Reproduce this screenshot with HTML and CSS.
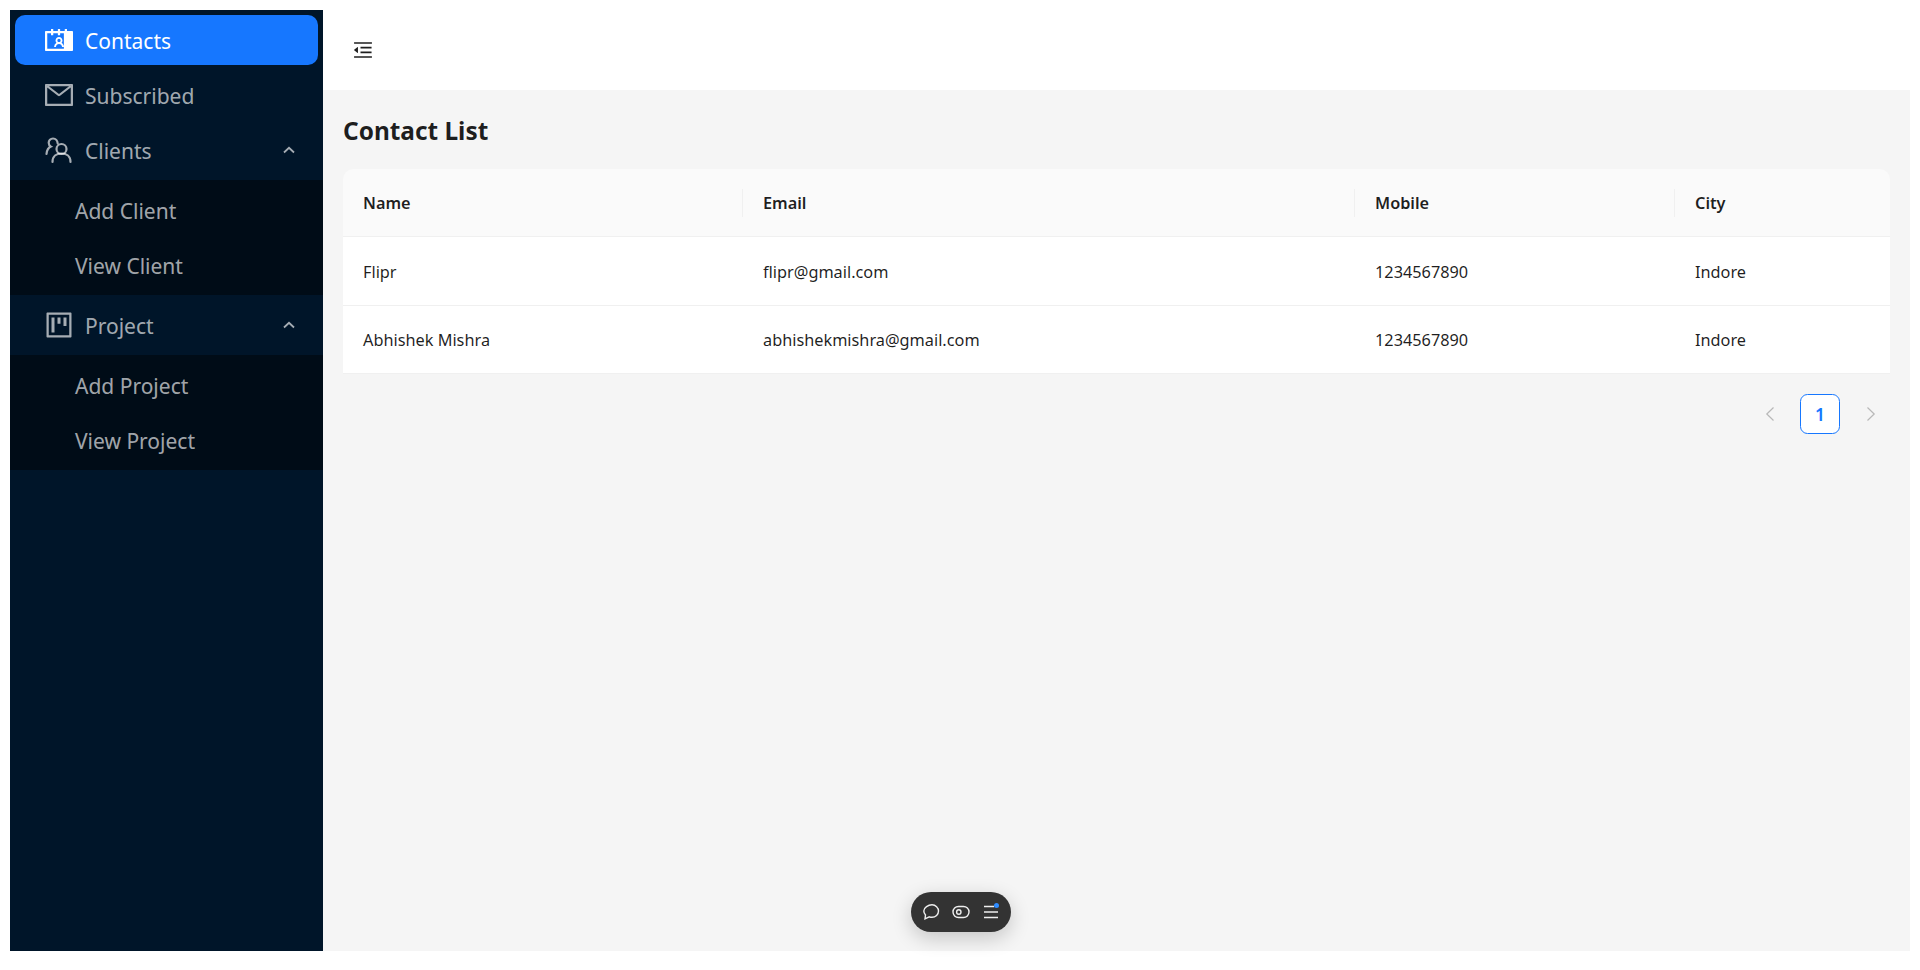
FILE: index.html
```html
<!DOCTYPE html>
<html lang="en">
<head>
<meta charset="utf-8">
<title>Contact List</title>
<link rel="stylesheet" href="styles.css">
</head>
<body>
<div class="app">
  <aside class="sider">
    <div class="item active">
      <svg class="icon" viewBox="64 64 896 896"><path d="M594.3 601.5a111.8 111.8 0 0029.1-75.5c0-61.9-49.9-112-111.4-112s-111.4 50.1-111.4 112c0 29.1 11 55.5 29.1 75.5a158.09 158.09 0 00-74.6 126.1 8 8 0 008 8.4H407c4.2 0 7.6-3.3 7.9-7.5 3.8-50.6 46-90.5 97.2-90.5s93.4 40 97.2 90.5c.3 4.2 3.7 7.5 7.9 7.5H660a8 8 0 008-8.4c-2.8-53.3-32-99.7-74.6-126.1zM512 578c-28.5 0-51.7-23.3-51.7-52s23.2-52 51.7-52 51.7 23.3 51.7 52-23.2 52-51.7 52zm416-354H768v-56c0-4.4-3.6-8-8-8h-56c-4.4 0-8 3.6-8 8v56H548v-56c0-4.4-3.6-8-8-8h-56c-4.4 0-8 3.6-8 8v56H328v-56c0-4.4-3.6-8-8-8h-56c-4.4 0-8 3.6-8 8v56H96c-17.7 0-32 14.3-32 32v576c0 17.7 14.3 32 32 32h832c17.7 0 32-14.3 32-32V256c0-17.7-14.3-32-32-32zm-40 568H136V296h120v56c0 4.4 3.6 8 8 8h56c4.4 0 8-3.6 8-8v-56h148v56c0 4.4 3.6 8 8 8h56c4.4 0 8-3.6 8-8v-56h120v496z"/></svg>
      <span>Contacts</span>
    </div>
    <div class="item">
      <svg class="icon" viewBox="64 64 896 896"><path d="M928 160H96c-17.7 0-32 14.3-32 32v640c0 17.7 14.3 32 32 32h832c17.7 0 32-14.3 32-32V192c0-17.7-14.3-32-32-32zm-40 110.8V792H136V270.8l-27.6-21.5 39.3-50.5 42.8 33.3h643.1l42.8-33.3 39.3 50.5-27.7 21.5zM833.6 232L512 482 190.4 232l-42.8-33.3-39.3 50.5 27.6 21.5 341.6 265.6a55.99 55.99 0 0068.7 0L888 270.8l27.6-21.5-39.3-50.5-42.7 33.2z"/></svg>
      <span>Subscribed</span>
    </div>
    <div class="item">
      <svg class="icon stroked" viewBox="0 0 28 28"><circle cx="16.5" cy="13" r="5"/><path d="M7.5 26c0-5.5 4-8.5 9-8.5s9 3 9 8.5"/><path d="M12.7 7.500c-.2-2.600-2-5-4.700-5-2.500 0-4.300 2-4.300 4.300 0 1.700.8 3 2.200 3.800C3.500 11.700 1.800 14.800 1.500 18"/></svg>
      <span>Clients</span>
      <svg class="chevron" viewBox="0 0 12 8"><path d="M1 6.500 6 1.800l5 4.700"/></svg>
    </div>
    <div class="submenu">
      <div class="item sub"><span>Add Client</span></div>
      <div class="item sub"><span>View Client</span></div>
    </div>
    <div class="item">
      <svg class="icon" viewBox="64 64 896 896"><path d="M280 752h80c4.400 0 8-3.600 8-8V280c0-4.400-3.600-8-8-8h-80c-4.400 0-8 3.600-8 8v464c0 4.400 3.600 8 8 8zm192-280h80c4.400 0 8-3.600 8-8V280c0-4.400-3.600-8-8-8h-80c-4.400 0-8 3.600-8 8v184c0 4.400 3.600 8 8 8zm192 72h80c4.400 0 8-3.600 8-8V280c0-4.400-3.600-8-8-8h-80c-4.400 0-8 3.600-8 8v256c0 4.400 3.600 8 8 8zm216-432H144c-17.700 0-32 14.300-32 32v736c0 17.700 14.300 32 32 32h736c17.700 0 32-14.300 32-32V144c0-17.700-14.300-32-32-32zm-40 728H184V184h656v656z"/></svg>
      <span>Project</span>
      <svg class="chevron" viewBox="0 0 12 8"><path d="M1 6.500 6 1.800l5 4.700"/></svg>
    </div>
    <div class="submenu">
      <div class="item sub"><span>Add Project</span></div>
      <div class="item sub"><span>View Project</span></div>
    </div>
  </aside>
  <div class="main">
    <header class="topbar">
      <svg class="fold" viewBox="64 64 896 896"><path d="M408 442h480c4.400 0 8-3.600 8-8v-56c0-4.400-3.600-8-8-8H408c-4.400 0-8 3.600-8 8v56c0 4.400 3.600 8 8 8zm-8 204c0 4.400 3.600 8 8 8h480c4.400 0 8-3.600 8-8v-56c0-4.400-3.600-8-8-8H408c-4.400 0-8 3.600-8 8v56zm504-486H120c-4.400 0-8 3.600-8 8v56c0 4.400 3.600 8 8 8h784c4.400 0 8-3.600 8-8v-56c0-4.400-3.600-8-8-8zm0 632H120c-4.400 0-8 3.600-8 8v56c0 4.400 3.600 8 8 8h784c4.400 0 8-3.600 8-8v-56c0-4.400-3.600-8-8-8zM115.400 518.900L271.700 642c5.800 4.600 14.400.5 14.400-6.900V388.900c0-7.400-8.500-11.500-14.400-6.900L115.400 505.100a8.740 8.740 0 000 13.800z"/></svg>
    </header>
    <main class="content">
      <h1 class="title">Contact List</h1>
      <table class="table">
        <colgroup>
          <col class="c-name"><col class="c-email"><col class="c-mobile"><col class="c-city">
        </colgroup>
        <thead>
          <tr><th>Name</th><th>Email</th><th>Mobile</th><th>City</th></tr>
        </thead>
        <tbody>
          <tr><td>Flipr</td><td>flipr@gmail.com</td><td>1234567890</td><td>Indore</td></tr>
          <tr><td>Abhishek Mishra</td><td>abhishekmishra@gmail.com</td><td>1234567890</td><td>Indore</td></tr>
        </tbody>
      </table>
      <nav class="pager">
        <svg class="pager-arrow" viewBox="0 0 10 16"><path d="M8.500 1.500 1.800 8l6.700 6.500"/></svg>
        <span class="page">1</span>
        <svg class="pager-arrow pager-next" viewBox="0 0 10 16"><path d="M1.500 1.500 8.200 8l-6.700 6.500"/></svg>
      </nav>
    </main>
  </div>
</div>
<div class="pill">
  <svg class="pill-icon" viewBox="0 0 18 18"><path d="M10 1.800c3.600 0 6.500 2.800 6.500 6.300s-2.900 6.200-6.500 6.200c-1 0-1.900-.2-2.700-.5l-4.300 2 .5-3.800C2.400 10.800 1.800 9.500 1.800 8.100 1.800 4.600 6.300 1.800 10 1.800z"/></svg>
  <svg class="pill-icon" viewBox="0 0 18 18"><rect x="1" y="3.500" width="16" height="11" rx="5.500"/><circle cx="6.800" cy="9" r="2.200"/></svg>
  <span class="pill-menu">
    <svg class="pill-icon" viewBox="0 0 18 18"><path d="M2 3.500h10M2 9h14M2 14.500h14"/></svg>
    <i class="pill-dot"></i>
  </span>
</div>
</body>
</html>
```

FILE: styles.css
```css
* { box-sizing: border-box; }
html, body { margin: 0; height: 970px; overflow: hidden; background: #fff; }
body { font-family: "Noto Sans", "Open Sans", sans-serif; color: rgba(0,0,0,.88); }

.app { display: flex; height: 970px; }

.sider {
  flex: 0 0 313px;
  margin: 10px 0 19px 10px;
  background: #001529;
  padding-top: 5px;
  color: rgba(255,255,255,.65);
}
.item {
  display: flex;
  align-items: center;
  height: 50px;
  margin: 0 5px 5px;
  padding-left: 30px;
  padding-right: 23px;
  border-radius: 10px;
  font-size: 21px;
}
.item span { padding-top: 1px; }
.item .icon { width: 28px; height: 28px; flex: none; margin-right: 12px; fill: currentColor; }
.item .icon.stroked { fill: none; stroke: currentColor; stroke-width: 2.200; stroke-linecap: round; }
.item.active { background: #1677ff; color: #fff; }
.chevron {
  width: 12px; height: 8px; margin-left: auto; flex: none;
  fill: none; stroke: currentColor; stroke-width: 1.800;
}
.submenu { display: flow-root; background: #000c17; padding-top: 5px; margin-bottom: 5px; }
.item.sub { padding-left: 60px; }

.main { flex: 1; display: flex; flex-direction: column; margin: 0 10px 19px 0; min-width: 0; }
.topbar { flex: 0 0 90px; background: #fff; display: flex; align-items: center; padding: 10px 0 0 30px; }
.fold { width: 20px; height: 20px; fill: rgba(0,0,0,.88); }
.content { flex: 1; background: #f5f5f5; padding: 20px; }
.title { margin: 1px 0 19px; font-size: 24.400px; line-height: 39px; font-weight: 700; }

.table { width: 100%; border-collapse: separate; border-spacing: 0; table-layout: fixed; font-size: 16.300px; }
.c-name { width: 400px; }
.c-email { width: 612px; }
.c-mobile { width: 320px; }
.table th {
  position: relative;
  height: 68px; padding: 1px 20px 0; text-align: left; font-weight: 600;
  background: #fafafa; border-bottom: 1px solid #f0f0f0;
}
.table th:first-child { border-top-left-radius: 10px; }
.table th:last-child { border-top-right-radius: 10px; }
.table th:not(:last-child)::after {
  content: ""; position: absolute; right: 0; top: 20px; height: 28px; width: 1px; background: #f0f0f0;
}
.table td { height: 68.500px; padding: 2px 20px 0; background: #fff; border-bottom: 1px solid #f0f0f0; }

.pager { display: flex; justify-content: flex-end; align-items: center; gap: 25px; margin-top: 20px; padding-right: 14px; }
.pager-next { margin-left: 1px; }
.pager-arrow { width: 10px; height: 16px; fill: none; stroke: rgba(0,0,0,.25); stroke-width: 1.200; }
.page {
  width: 40px; height: 40px; display: flex; align-items: center; justify-content: center;
  background: #fff; border: 1px solid #1677ff; border-radius: 7.500px; color: #1677ff;
  font-size: 17.500px; font-weight: 600;
}

.pill {
  position: fixed; left: 911px; top: 892px; width: 100px; height: 40px;
  display: flex; align-items: center; justify-content: center; gap: 12px;
  background: #333; border-radius: 20px;
  box-shadow: 0 6px 20px rgba(0,0,0,.2);
}
.pill-icon { width: 18px; height: 18px; display: block; fill: none; stroke: #eee; stroke-width: 1.400; }
.pill-menu { position: relative; display: block; }
.pill-dot { position: absolute; right: 1px; top: 0; width: 5px; height: 5px; border-radius: 50%; background: #2f8cff; }
```
